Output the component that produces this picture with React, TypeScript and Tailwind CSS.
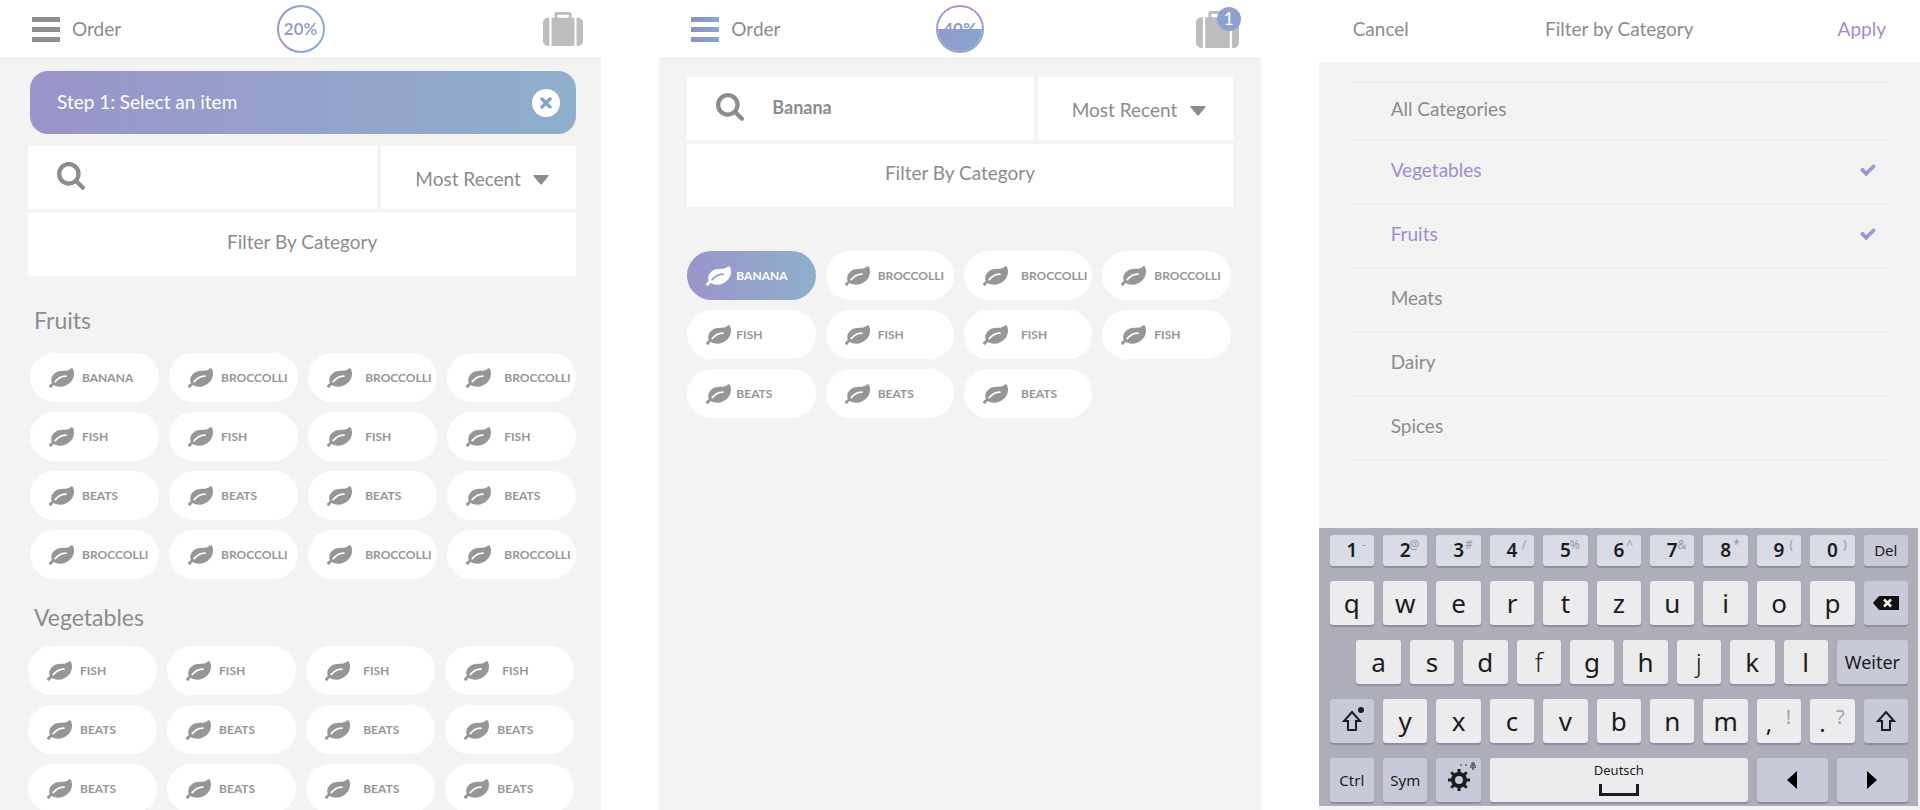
import { useState } from 'react';
import type { ReactNode } from 'react';

interface Item {
  name: string;
  gap?: 'tight' | 'wide'; // room between the leaf and the label
  selected?: boolean;
}

const fruitRows = ['BANANA', 'FISH', 'BEATS', 'BROCCOLLI'];

const fruits: Item[] = fruitRows.flatMap((name) => {
  const rest = name === 'BANANA' ? 'BROCCOLLI' : name;
  return [{ name }, { name: rest }, { name: rest, gap: 'wide' as const }, { name: rest, gap: 'wide' as const }];
});

const vegetables: Item[] = [
  { name: 'FISH' }, { name: 'FISH' }, { name: 'FISH', gap: 'wide' }, { name: 'FISH', gap: 'wide' },
  { name: 'BEATS' }, { name: 'BEATS' }, { name: 'BEATS', gap: 'wide' }, { name: 'BEATS' },
  { name: 'BEATS' }, { name: 'BEATS' }, { name: 'BEATS', gap: 'wide' }, { name: 'BEATS' },
];

const results: Item[] = [
  { name: 'BANANA', gap: 'tight', selected: true }, { name: 'BROCCOLLI' }, { name: 'BROCCOLLI', gap: 'wide' }, { name: 'BROCCOLLI' },
  { name: 'FISH', gap: 'tight' }, { name: 'FISH' }, { name: 'FISH', gap: 'wide' }, { name: 'FISH' },
  { name: 'BEATS', gap: 'tight' }, { name: 'BEATS' }, { name: 'BEATS', gap: 'wide' },
];

const categories = ['All Categories', 'Vegetables', 'Fruits', 'Meats', 'Dairy', 'Spices'];

const numberKeys = [
  ['1', '-'], ['2', '@'], ['3', '#'], ['4', '/'], ['5', '%'],
  ['6', '^'], ['7', '&'], ['8', '*'], ['9', '('], ['0', ')'],
];

/* Icons */

const LeafIcon = () => (
  <svg viewBox="0 128 1792 1408" className="w-[25px] h-5 shrink-0" fill="currentColor" aria-hidden="true">
    <path d="M1280 704q0-26-19-45t-45-19q-172 0-318 49.5t-259.5 134-235.5 219.5q-19 21-19 45 0 26 19 45t45 19q24 0 45-19 27-24 74-71t67-66q137-124 268.5-176t313.5-52q26 0 45-19t19-45zm512-198q0 95-20 193-46 224-184.5 383t-357.5 268q-214 108-438 108-148 0-286-47-15-5-88-42t-96-37q-16 0-39.5 32t-45 70-52.5 70-60 32q-43 0-63.5-17.5t-45.5-59.5q-2-4-6-11t-5.5-10-3-9.5-1.5-13.5q0-35 31-73.5t68-65.5 68-56 31-48q0-4-14-38t-16-44q-9-51-9-104 0-115 43.5-220t119-184.5 170.5-139 204-95.5q55-18 145-25.5t179.5-9 178.5-6 163.5-24 113.5-56.5l29.5-29.5 29.5-28 27-20 36.5-16 43.5-4.5q39 0 70.5 46t47.5 112 24 124 8 96z" />
  </svg>
);

const SuitcaseIcon = ({ className }: { className: string }) => (
  <svg viewBox="0 128 1792 1536" className={className} fill="currentColor" preserveAspectRatio="none" aria-hidden="true">
    <path d="M640 384h512v-128h-512v128zm-352 0v1280h-64q-92 0-158-66t-66-158v-832q0-92 66-158t158-66h64zm1120 0v1280h-1024v-1280h128v-160q0-40 28-68t68-28h576q40 0 68 28t28 68v160h128zm384 224v832q0 92-66 158t-158 66h-64v-1280h64q92 0 158 66t66 158z" />
  </svg>
);

const SearchIcon = () => (
  <svg viewBox="64 128 1664 1664" className="size-7 shrink-0" fill="currentColor" aria-hidden="true">
    <path d="M1216 832q0-185-131.5-316.5t-316.5-131.5-316.5 131.5-131.5 316.5 131.5 316.5 316.5 131.5 316.5-131.5 131.5-316.5zm512 832q0 52-38 90t-90 38q-54 0-90-38l-343-342q-179 124-399 124-143 0-273.5-55.5t-225-150-150-225-55.5-273.5 55.5-273.5 150-225 225-150 273.5-55.5 273.5 55.5 225 150 150 225 55.5 273.5q0 220-124 399l343 343q37 37 37 90z" />
  </svg>
);

const CheckIcon = () => (
  <svg viewBox="121 320 1550 1202" className="w-4 h-3" aria-hidden="true">
    <defs>
      <linearGradient id="check" x1="0" y1="1" x2="1" y2="0">
        <stop offset="0.3" stopColor="#9a93cc" />
        <stop offset="1" stopColor="#86b2cf" />
      </linearGradient>
    </defs>
    <path fill="url(#check)" d="M1671 566q0 40-28 68l-724 724-136 136q-28 28-68 28t-68-28l-136-136-362-362q-28-28-28-68t28-68l136-136q28-28 68-28t68 28l294 295 656-657q28-28 68-28t68 28l136 136q28 28 28 68z" />
  </svg>
);

const ShiftIcon = () => (
  <svg viewBox="0 0 20 22" className="w-5 h-[22px]" fill="none" stroke="currentColor" strokeWidth="2" aria-hidden="true">
    <path d="M10 2 L18 11 H14 V20 H6 V11 H2 Z" />
  </svg>
);

const GearIcon = () => (
  <svg viewBox="0 0 24 24" className="size-6" fill="none" stroke="currentColor" aria-hidden="true">
    <circle cx="12" cy="12" r="6" strokeWidth="4" />
    <path
      strokeWidth="3"
      d="M12 1v4M12 19v4M1 12h4M19 12h4M4.2 4.2 7 7M17 17l2.8 2.8M4.2 19.8 7 17M17 7l2.8-2.8"
    />
  </svg>
);

const MicIcon = () => (
  <svg viewBox="0 0 18 8" className="w-[18px] h-2" fill="#666670" aria-hidden="true">
    <circle cx="2" cy="3" r="1" />
    <circle cx="7" cy="3" r="1" />
    <rect x="12" y="0" width="4" height="5" rx="2" />
    <path d="M11 3h1v2h4V3h1v3h-2v2h-2V6h-2z" />
  </svg>
);

/* Order screens */

interface TopBarProps {
  active?: boolean;
  progress: ReactNode;
  count?: number;
}

const TopBar = ({ active, progress, count }: TopBarProps) => {
  const bar = active
    ? 'h-[5px] bg-linear-to-r from-[#918dce] to-[#83a9cf]'
    : 'h-[5px] bg-[#8f8f8f]';

  return (
    <header className="grid grid-cols-3 items-center h-[59px] pl-8 pr-[18px] bg-white border-b border-[#e8e8e8] shrink-0">
      <div className="flex items-center gap-3">
        <button type="button" aria-label="Menu" className="flex flex-col gap-[5px] w-7">
          <span className={bar} />
          <span className={bar} />
          <span className={bar} />
        </button>
        <span className="text-[19px]">Order</span>
      </div>
      <div className="flex justify-center pr-3.5">{progress}</div>
      {count ? (
        <button type="button" aria-label="Order bag" className="relative justify-self-end pr-1 text-[#bdbdbd]">
          <SuitcaseIcon className="w-[43px] h-[37px]" />
          <span className="absolute -top-1 right-0.5 size-6 rounded-full bg-[#8e9fd0] text-white text-[17px] leading-6 text-center">
            {count}
          </span>
        </button>
      ) : (
        <button type="button" aria-label="Order bag" className="justify-self-end text-[#bdbdbd]">
          <SuitcaseIcon className="w-10 h-[34px]" />
        </button>
      )}
    </header>
  );
};

const SearchPanel = ({ id, initial }: { id: string; initial: string }) => {
  const [term, setTerm] = useState(initial);

  return (
    <div className="flex flex-col gap-1">
      <div className="flex gap-1">
        <label htmlFor={`search-${id}`} className="flex flex-1 items-center gap-7 h-[63px] pl-[29px] pb-[3px] bg-white min-w-0">
          <SearchIcon />
          <input
            id={`search-${id}`}
            type="text"
            aria-label="Search items"
            value={term}
            onChange={(e) => setTerm(e.target.value)}
            className="flex-1 min-w-0 text-[18px] font-bold outline-none"
          />
        </label>
        <label className="flex items-center gap-3 w-[195px] h-[63px] pl-[34px] pt-1 bg-white">
          <select aria-label="Sort order" className="appearance-none text-[19px] outline-none">
            <option>Most Recent</option>
          </select>
          <svg viewBox="0 0 16 10" className="w-4 h-2.5" fill="currentColor" aria-hidden="true">
            <path d="M1 0h14q1 0 .6 1L9 9q-1 1-2 0L.4 1Q0 0 1 0z" />
          </svg>
        </label>
      </div>
      <button type="button" className="h-[63px] pb-1 bg-white text-[19px]">
        Filter By Category
      </button>
    </div>
  );
};

const gaps = { tight: 'gap-[5px]', normal: 'gap-2', wide: 'gap-[13px]' };

const ItemGrid = ({ items }: { items: Item[] }) => (
  <div className="grid grid-cols-4 gap-[10px]">
    {items.map((item, i) => (
      <button
        key={i}
        type="button"
        className={`flex items-center h-[49px] pl-[19px] rounded-full text-[12px] font-bold ${
          gaps[item.gap ?? 'normal']
        } ${
          item.selected
            ? 'bg-linear-to-r from-[#9a94ca] to-[#8eafcc] text-white'
            : 'bg-white text-[#969696]'
        }`}
      >
        <LeafIcon />
        <span>{item.name}</span>
      </button>
    ))}
  </div>
);

const OrderScreen = () => (
  <section className="flex flex-col bg-[#f3f3f3] overflow-hidden">
    <TopBar
      progress={
        <div className="flex items-center justify-center size-12 rounded-full bg-linear-to-r from-[#9a94d4] to-[#83b0cf] p-0.5">
          <div className="flex items-center justify-center size-full rounded-full bg-white text-[17px] font-bold">
            <span className="bg-linear-to-r from-[#9a94d4] to-[#8ba5cf] bg-clip-text text-transparent">20%</span>
          </div>
        </div>
      }
    />
    <div className="pl-7 pr-[25px] pt-3">
      <div className="flex items-center justify-between h-[63px] ml-0.5 mb-3 pl-[27px] pr-4 rounded-[18px] bg-linear-to-r from-[#9a94ca] to-[#8eafcc] text-white">
        <span className="text-[19px]">Step 1: Select an item</span>
        <button type="button" aria-label="Close" className="flex items-center justify-center size-7 rounded-full bg-white text-[#83a5cb]">
          <svg viewBox="0 0 12 12" className="size-3" stroke="currentColor" strokeWidth="3.5" strokeLinecap="round" aria-hidden="true">
            <path d="M2 2l8 8M10 2l-8 8" />
          </svg>
        </button>
      </div>
      <SearchPanel id="order" initial="" />
      <h2 className="pl-1.5 pt-7 pb-[17px] text-[23px] leading-8">Fruits</h2>
      <div className="pl-0.5">
        <ItemGrid items={fruits} />
      </div>
      <h2 className="pl-1.5 pt-[22px] pb-[13px] text-[23px] leading-8">Vegetables</h2>
      <div className="pr-0.5">
        <ItemGrid items={vegetables} />
      </div>
    </div>
  </section>
);

const SearchScreen = () => (
  <section className="flex flex-col bg-[#f3f3f3] overflow-hidden">
    <TopBar
      active
      count={1}
      progress={
        <div className="relative flex items-center justify-center size-12 rounded-full border-2 border-[#9a9fd2] overflow-hidden text-[17px] font-bold text-[#8f99cf]">
          <span>40%</span>
          {/* filled part of the gauge */}
          <span className="absolute inset-x-0 bottom-0 h-[22px] bg-linear-to-r from-[#9199cf] to-[#86a6cd]" />
        </div>
      }
    />
    <div className="px-7 pt-[18px]">
      <SearchPanel id="search" initial="Banana" />
      <div className="pt-11 pr-0.5">
        <ItemGrid items={results} />
      </div>
    </div>
  </section>
);

/* Category filter */

interface KeyProps {
  label: string;
  children?: ReactNode;
  className?: string;
}

const Key = ({ label, children, className = 'col-span-2 bg-[#ececee] text-[26px]' }: KeyProps) => (
  <button
    type="button"
    aria-label={label}
    className={`relative flex items-center justify-center rounded-[3px] shadow-[0_2px_1px_#8f8f9b] text-[#1c1c20] ${className}`}
  >
    {children ?? label}
  </button>
);

const Keyboard = () => (
  <div className="grid grid-cols-22 grid-rows-[31px_44px_44px_44px_44px] gap-x-[9px] gap-y-[15px] mt-auto mb-1 mr-0.5 pl-[11px] pr-2.5 pt-[7px] pb-1 bg-[#aeaeba] font-['Noto_Sans',sans-serif]">
    {numberKeys.map(([digit, hint]) => (
      <Key key={digit} label={digit} className="col-span-2 bg-[#d9dbe7] text-[19px] font-semibold">
        {digit}
        <span className="absolute top-0.5 right-2 text-[12px] leading-4 font-normal text-[#9a9aa6]">{hint}</span>
      </Key>
    ))}
    <Key label="Del" className="col-span-2 bg-[#c8cad9] text-[15px]" />

    {['q', 'w', 'e', 'r', 't', 'z', 'u', 'i', 'o', 'p'].map((k) => (
      <Key key={k} label={k} />
    ))}
    <Key label="Backspace" className="col-span-2 bg-[#c8cad9]">
      <svg viewBox="0 0 26 14" className="w-[26px] h-3.5" aria-hidden="true">
        <path fill="#111" d="M0 7 6 0H26V14H6z" />
        <path stroke="#eee" strokeWidth="2.5" d="M11 3.5l7 7M18 3.5l-7 7" />
      </svg>
    </Key>

    <Key label="a" className="col-start-2 col-span-2 bg-[#ececee] text-[26px]" />
    {['s', 'd', 'f', 'g', 'h', 'j', 'k', 'l'].map((k) => (
      <Key
        key={k}
        label={k}
        className={
          k === 'f' || k === 'j'
            ? 'col-span-2 bg-[#ececee] text-[26px] font-light'
            : 'col-span-2 bg-[#ececee] text-[26px]'
        }
      />
    ))}
    <Key label="Weiter" className="col-span-3 bg-[#c8cad9] text-[18px]" />

    <Key label="Shift" className="col-span-2 bg-[#c8cad9]">
      <ShiftIcon />
      <span className="absolute top-2 right-2.5 size-1.5 rounded-full bg-[#1c1c20]" />
    </Key>
    {['y', 'x', 'c', 'v', 'b', 'n', 'm'].map((k) => (
      <Key key={k} label={k} />
    ))}
    {[[',', '!'], ['.', '?']].map(([mark, hint]) => (
      <Key key={mark} label={mark} className="col-span-2 bg-[#ececee] text-[24px]">
        <span className="pr-5 pt-1">{mark}</span>
        <span className="absolute top-1.5 right-2.5 text-[20px] leading-6 text-[#a0a0a4]">{hint}</span>
      </Key>
    ))}
    <Key label="Right shift" className="col-span-2 bg-[#c8cad9]">
      <ShiftIcon />
    </Key>

    <Key label="Ctrl" className="col-span-2 bg-[#c8cad9] text-[15px]" />
    <Key label="Sym" className="col-span-2 bg-[#c8cad9] text-[15px]" />
    <Key label="Settings" className="col-span-2 bg-[#c8cad9]">
      <GearIcon />
      <span className="absolute top-1 right-1">
        <MicIcon />
      </span>
    </Key>
    <Key label="Deutsch" className="col-span-10 flex-col gap-1 pb-1 bg-[#ececee] text-[13px]">
      <span className="leading-5">Deutsch</span>
      <span className="w-10 h-3 border-x-3 border-b-3 border-[#1c1c20]" />
    </Key>
    <Key label="Left" className="col-span-3 bg-[#c8cad9]">
      <svg viewBox="0 0 10 18" className="w-2.5 h-[18px]" aria-hidden="true">
        <path d="M10 0v18L0 9z" />
      </svg>
    </Key>
    <Key label="Right" className="col-span-3 bg-[#c8cad9]">
      <svg viewBox="0 0 10 18" className="w-2.5 h-[18px]" aria-hidden="true">
        <path d="M0 0v18l10-9z" />
      </svg>
    </Key>
  </div>
);

const FilterScreen = () => {
  const [picked, setPicked] = useState<string[]>(['Vegetables', 'Fruits']);

  const toggle = (name: string) => {
    setPicked(picked.includes(name) ? picked.filter((p) => p !== name) : [...picked, name]);
  };

  return (
    <section className="flex flex-col bg-[#f3f3f3] overflow-hidden">
      <header className="grid grid-cols-[1fr_auto_1fr] items-center h-[62px] px-[34px] pb-1 bg-white text-[19px] shrink-0">
        <button type="button" className="justify-self-start">Cancel</button>
        <h1>Filter by Category</h1>
        <button type="button" className="justify-self-end text-[#9690d2]">Apply</button>
      </header>
      <ul className="mx-8 mt-5 border-t border-[#e9e9e9] text-[19px]">
        {categories.map((name) => (
          <li key={name} className="border-b border-[#e9e9e9]">
            <label
              className={`flex items-center justify-between pl-10 pr-3 pb-[3px] ${
                name === 'All Categories' ? 'h-14' : 'h-[63px]'
              } ${picked.includes(name) ? 'text-[#9690d2]' : ''}`}
            >
              {name}
              <input
                type="checkbox"
                checked={picked.includes(name)}
                onChange={() => toggle(name)}
                className="sr-only"
              />
              {picked.includes(name) && <CheckIcon />}
            </label>
          </li>
        ))}
      </ul>
      <Keyboard />
    </section>
  );
};

const App = () => (
  <main className="grid grid-cols-3 gap-[58px] h-screen overflow-hidden bg-white text-[#8c8c8c] font-['Lato',sans-serif]">
    <OrderScreen />
    <SearchScreen />
    <FilterScreen />
  </main>
);

export default App;
